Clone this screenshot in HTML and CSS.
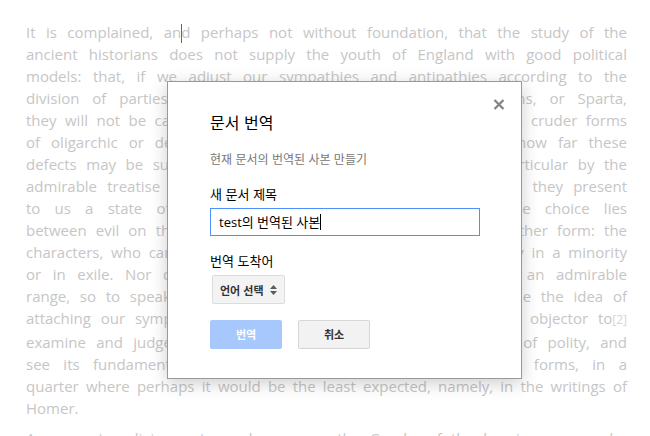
FILE: index.html
```html
<!DOCTYPE html>
<html lang="ko">
<head>
    <meta charset="UTF-8">
    <meta name="viewport" content="width=device-width, initial-scale=1.0">
    <title>문서 번역</title>
    <link rel="stylesheet" href="styles.css">
</head>
<body>
    <div class="doc">
        <p class="para">
            <span class="line">It is complained, an<span class="caret"></span>d perhaps not without foundation, that the study of the</span>
            <span class="line">ancient historians does not supply the youth of England with good political</span>
            <span class="line">models: that, if we adjust our sympathies and antipathies according to the</span>
            <span class="line">division of parties in the republics of Rome, Carthage, Athens, or Sparta,</span>
            <span class="line">they will not be carried towards freedom, but rather towards the cruder forms</span>
            <span class="line">of oligarchic or democratic government. It is a fair question, how far these</span>
            <span class="line">defects may be supplied from other ancient sources, and in particular by the</span>
            <span class="line">admirable treatise of Aristotle on Politics; but even in the ideal they present</span>
            <span class="line">to us a state of society in perpetual conflict, in which the choice lies</span>
            <span class="line">between evil on the one side, and on the other evil in some other form: the</span>
            <span class="line">characters, who can be admired and trusted, are found commonly in a minority</span>
            <span class="line">or in exile. Nor does the later Greek literature itself present an admirable</span>
            <span class="line">range, so to speak, of political models, such as might well guide the idea of</span>
            <span class="line">attaching our sympathies to freedom; yet it is still open to the objector to<span class="ref">[2]</span></span>
            <span class="line">examine and judge for himself the most primitive known type of polity, and</span>
            <span class="line">see its fundamental features exhibited in their very simplest forms, in a</span>
            <span class="line">quarter where perhaps it would be the least expected, namely, in the writings of</span>
            <span class="line last">Homer.</span>
        </p>
        <p class="para">
            <span class="line">As respects religion, arts, and manners, the Greeks of the heroic age may be</span>
        </p>
    </div>

    <div class="dialog">
        <span class="close">
            <svg width="12" height="11" viewBox="0 0 12 11">
                <path d="M1.5 1 L10.5 10 M10.5 1 L1.5 10" stroke="#858585" stroke-width="2.4" fill="none"/>
            </svg>
        </span>
        <h2 class="dialog-title">문서 번역</h2>
        <div class="dialog-sub">현재 문서의 번역된 사본 만들기</div>
        <div class="field-label">새 문서 제목</div>
        <div class="text-input">test의 번역된 사본<span class="input-caret"></span></div>
        <div class="field-label second">번역 도착어</div>
        <div class="select">
            <span>언어 선택</span>
            <svg width="7" height="10" viewBox="0 0 7 10">
                <path d="M3.5 0 L7 4 L0 4 Z M0 6 L7 6 L3.5 10 Z" fill="#5a5a5a"/>
            </svg>
        </div>
        <div class="buttons">
            <div class="btn btn-primary">번역</div>
            <div class="btn btn-cancel">취소</div>
        </div>
    </div>
</body>
</html>
```

FILE: styles.css
```css
body {
    margin: 0;
    background: #fff;
    font-family: 'Open Sans', 'Noto Sans CJK KR', sans-serif;
}
.doc {
    padding: 21px 23px 0 26px;
    color: #c6c6c6;
    font-size: 15px;
    line-height: 22px;
}
.para {
    margin: 0 0 8px;
}
.line {
    display: block;
    text-align: justify;
    text-align-last: justify;
    white-space: nowrap;
}
.line.last {
    text-align-last: left;
}
.caret {
    display: inline-block;
    width: 0;
    height: 19px;
    border-left: 1px solid #666;
    margin-right: -1px;
    vertical-align: -5px;
}
.ref {
    font-size: 12px;
    color: #d4d4d4;
}
.dialog {
    position: absolute;
    left: 167px;
    top: 81px;
    width: 355px;
    height: 298px;
    box-sizing: border-box;
    padding: 30px 42px 0;
    background: #fff;
    border: 1px solid #999;
    box-shadow: 0 4px 16px rgba(0, 0, 0, 0.2);
    font-family: 'Noto Sans CJK KR', 'Open Sans', sans-serif;
    color: #222;
}
.close {
    position: absolute;
    top: 17px;
    right: 16px;
    line-height: 0;
}
.dialog-title {
    margin: 0;
    font-size: 16px;
    line-height: 20px;
    font-weight: normal;
    color: #000;
}
.dialog-sub {
    margin-top: 19px;
    font-size: 12px;
    line-height: 16px;
    color: #777;
}
.field-label {
    margin-top: 18px;
    font-size: 13px;
    line-height: 17px;
    color: #000;
}
.field-label.second {
    margin-top: 16px;
}
.text-input {
    margin-top: 6px;
    width: 270px;
    height: 28px;
    box-sizing: border-box;
    border: 1px solid #4d90fe;
    padding: 0 8px;
    font-family: 'Open Sans', 'Noto Sans CJK KR', sans-serif;
    font-size: 13px;
    line-height: 26px;
    color: #000;
}
.input-caret {
    display: inline-block;
    width: 0;
    height: 16px;
    border-left: 1px solid #000;
    vertical-align: -3px;
}
.select {
    display: flex;
    align-items: center;
    gap: 6px;
    margin: 6px 0 0 2px;
    width: 73px;
    height: 29px;
    box-sizing: border-box;
    padding: 0 7px;
    background: #f3f3f3;
    border: 1px solid #dcdcdc;
    border-radius: 2px;
    font-size: 11px;
    font-weight: bold;
    color: #333;
}
.buttons {
    display: flex;
    gap: 16px;
    margin-top: 16px;
}
.btn {
    width: 72px;
    height: 29px;
    box-sizing: border-box;
    border-radius: 2px;
    font-size: 11px;
    font-weight: bold;
    line-height: 27px;
    text-align: center;
}
.btn-primary {
    background: #a6c8fd;
    border: 1px solid #a6c8fd;
    color: #fff;
}
.btn-cancel {
    background: #f2f2f2;
    border: 1px solid #d6d6d6;
    color: #333;
}
```
